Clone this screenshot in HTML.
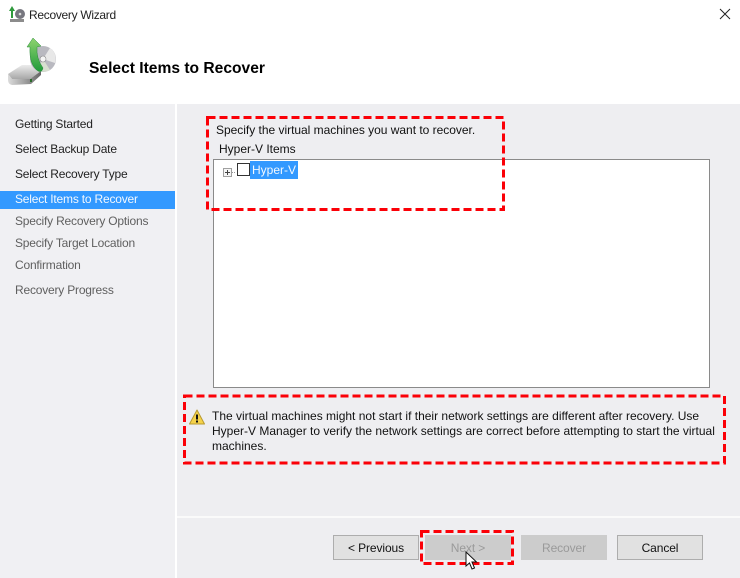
<!DOCTYPE html>
<html>
<head>
<meta charset="utf-8">
<style>
html,body{margin:0;padding:0;background:#fff;}
body{width:740px;height:578px;position:relative;overflow:hidden;font-family:"Liberation Sans",sans-serif;font-size:12px;color:#111;}
.a{position:absolute;}
.t{position:absolute;white-space:nowrap;line-height:16px;}
.nav{color:#222;left:15px;letter-spacing:-.2px;}
.dis{color:#5f5f5f;left:15px;letter-spacing:-.2px;}
.btn{position:absolute;top:535px;width:84px;height:23px;border:1px solid #adadad;background:#e1e1e1;text-align:center;line-height:24px;color:#111;letter-spacing:-.1px;}
.off{background:#cccccc;border-color:#cccccc;color:#9a9a9a;}
</style>
</head>
<body>
<div class="a" style="left:0;top:104px;width:175px;height:474px;background:#f0f0f3;"></div>
<div class="a" style="left:177px;top:104px;width:563px;height:474px;background:#eeeef1;"></div>
<div class="a" style="left:177px;top:516px;width:563px;height:2px;background:#fafafa;"></div>

<svg class="a" style="left:0;top:0" width="80" height="100" viewBox="0 0 80 100">
<defs>
<linearGradient id="h" x1="0" y1="0" x2="0" y2="1"><stop offset="0" stop-color="#ececec"/><stop offset="1" stop-color="#a8a8a8"/></linearGradient>
<linearGradient id="h2" x1="0" y1="0" x2="1" y2="0"><stop offset="0" stop-color="#dcdcdc"/><stop offset="1" stop-color="#666"/></linearGradient>
<linearGradient id="g" x1="0" y1="0" x2="0" y2="1"><stop offset="0" stop-color="#8fd46f"/><stop offset="1" stop-color="#1f9a3a"/></linearGradient>
</defs>
<path d="M10 19h14v3H10z" fill="#8c8c8c"/>
<circle cx="20" cy="14" r="5" fill="#77777f"/><circle cx="20" cy="14" r="1.300" fill="#ddd"/>
<path d="M11 18V11H9L12 6l3 5h-2v7z" fill="#2f9a3c"/>
<path d="M8 74L22 65H38L41 71L30 79H12Z" fill="url(#h)"/>
<path d="M8 74L12 79H30L41 71V75L31 84L12 85Q8 84 8 80Z" fill="url(#h2)"/>
<rect x="30" y="79" width="2" height="3" fill="#2a6a2a"/>
<circle cx="43" cy="59" r="13" fill="#b9b9c0"/>
<path d="M43 59L50 48A13 13 0 0 1 55 63Z" fill="#e8e8e8"/>
<path d="M43 59L37 70A13 13 0 0 0 50 70Z" fill="#d8dfd0"/>
<circle cx="43" cy="59" r="3" fill="#f4f4f4" stroke="#888" stroke-width=".6"/>
<path d="M33 38L41 46L37 47Q36 58 43 68Q42 73 38 71Q29 65 30 47L27 47Z" fill="url(#g)" stroke="#2a8a3a" stroke-width=".5"/>
</svg>
<div class="t" style="left:29px;top:7px;font-size:12px;letter-spacing:-.3px;color:#222;">Recovery Wizard</div>
<svg class="a" style="left:719px;top:8px" width="12" height="12" viewBox="0 0 12 12"><path d="M1 1l10 10M11 1L1 11" stroke="#222" stroke-width="1" fill="none"/></svg>

<div class="t" style="left:89px;top:60px;font-size:15.6px;font-weight:bold;line-height:18px;color:#000;">Select Items to Recover</div>

<div class="t nav" style="top:116px;">Getting Started</div>
<div class="t nav" style="top:141px;">Select Backup Date</div>
<div class="t nav" style="top:166px;">Select Recovery Type</div>
<div class="a" style="left:0;top:191px;width:175px;height:18px;background:#3399ff;"></div>
<div class="t" style="left:15px;top:191px;color:#f2f8ff;letter-spacing:-.2px;">Select Items to Recover</div>
<div class="t dis" style="top:213px;">Specify Recovery Options</div>
<div class="t dis" style="top:235px;">Specify Target Location</div>
<div class="t dis" style="top:257px;">Confirmation</div>
<div class="t dis" style="top:282px;">Recovery Progress</div>

<div class="t" style="left:216px;top:122px;letter-spacing:-.02px;">Specify the virtual machines you want to recover.</div>
<div class="t" style="left:219px;top:141px;">Hyper-V Items</div>
<div class="a" style="left:213px;top:159px;width:495px;height:227px;border:1px solid #8a8a8a;background:#fff;"></div>
<svg class="a" style="left:222px;top:160px" width="30" height="20" viewBox="0 0 30 20" shape-rendering="crispEdges">
<rect x="1.500" y="8.500" width="8" height="8" fill="#f6f6f6" stroke="#a0a0a0"/>
<path d="M3 12.500h5M5.500 10v5" stroke="#444" fill="none"/>
<path d="M10 12.500h1M12 12.500h1" stroke="#999"/>
<rect x="15.500" y="3.500" width="12" height="12" fill="#fff" stroke="#333"/>
</svg>
<div class="a" style="left:250px;top:161px;width:48px;height:18px;background:#3399ff;"></div>
<div class="t" style="left:252px;top:162px;color:#f2f8ff;">Hyper-V</div>

<svg class="a" style="left:189px;top:409px" width="16" height="16" viewBox="0 0 16 16">
<path d="M8 1L15.500 15H.5z" fill="#f5d24a" stroke="#b89a30" stroke-width="1" stroke-linejoin="round"/>
<rect x="7" y="5.500" width="2" height="5" fill="#111"/><rect x="7" y="11.500" width="2" height="2" fill="#111"/>
</svg>
<div class="t" style="left:212px;top:409px;line-height:15px;">The virtual machines might not start if their network settings are different after recovery. Use<br>Hyper-V Manager to verify the network settings are correct before attempting to start the virtual<br>machines.</div>

<div class="btn" style="left:333px;">&lt; Previous</div>
<div class="btn off" style="left:425px;">Next &gt;</div>
<div class="btn off" style="left:521px;">Recover</div>
<div class="btn" style="left:617px;">Cancel</div>

<svg class="a" style="left:0;top:0" width="740" height="578" fill="none" stroke="#fb0007" stroke-width="3" stroke-dasharray="8 4">
<rect x="207.500" y="117.500" width="296" height="92"/>
<rect x="184.500" y="396" width="540" height="67"/>
<rect x="421.500" y="531.500" width="91" height="32"/>
</svg>
<svg class="a" style="left:465px;top:551px" width="14" height="20" viewBox="0 0 14 20">
<path d="M1 1v14l3.500-3 2.500 6 2.500-1-2.500-6H11.500z" fill="#fff" stroke="#111" stroke-width="1"/>
</svg>
</body>
</html>
